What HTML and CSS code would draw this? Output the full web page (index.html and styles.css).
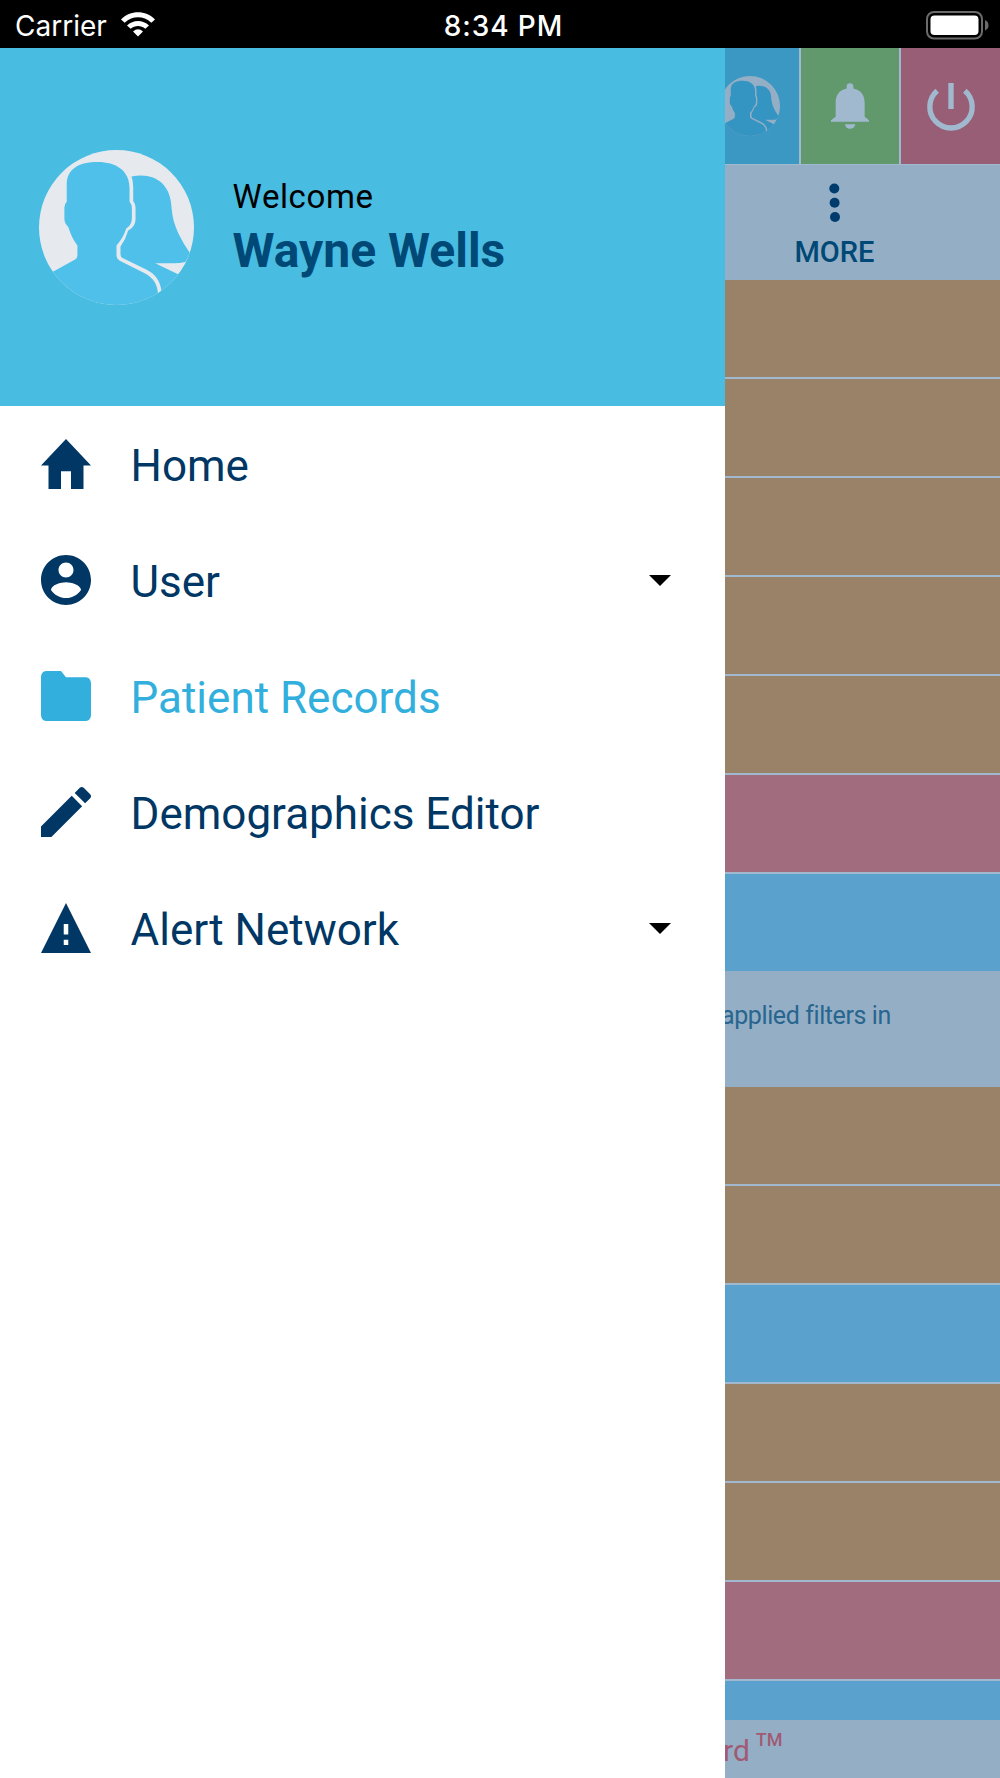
FILE: index.html
```
<!DOCTYPE html>
<html lang="en">
<head>
    <meta charset="UTF-8">
    <meta name="viewport" content="width=device-width, initial-scale=1.0">
    <title>Patient Records</title>
    <link rel="stylesheet" href="styles.css">
</head>
<body>

    <!-- Shared avatar artwork -->
    <svg class="defs" width="0" height="0">
        <defs>
            <clipPath id="avatar-clip"><circle cx="288" cy="292" r="232"/></clipPath>
            <symbol id="avatar" viewBox="56 60 464 464">
                <g clip-path="url(#avatar-clip)">
                    <rect class="avatar-bg" x="50" y="50" width="480" height="480"/>
                    <path class="avatar-fg" d="M99 424L164 388Q171 384 171 375V346Q153 322 144 291C137 284 132 277 132 266V232Q132 222 139 215V165C139 116 175 96 232 96C286 96 327 121 327 174V214Q334 222 334 234V262C334 278 328 288 317 295Q309 322 288 346V372C288 384 292 388 301 393L374 430C398 443 410 462 412 488L400 530H40V424z"/>
                    <path class="avatar-fg" d="M333 139C400 126 451 158 453 235C457 288 482 330 509 370L494 395Q480 399 460 399H404L474 433L520 450L470 530H400L422 480C419 451 402 430 377 418L306 383Q300 380 300 373V349Q316 327 323 301C337 294 345 282 345 266V232Q345 222 338 213V170Q338 153 333 139z"/>
                </g>
            </symbol>
        </defs>
    </svg>

    <!-- Phone status bar -->
    <div class="status-bar">
        <div class="carrier">
            <span>Carrier</span>
            <svg width="34" height="25" viewBox="362 36 102 74">
                <path fill="#fff" d="M362 58C390 29 436 29 464 58L453 68C429 46 397 46 373 68zM380 76C398 58 428 58 446 76L435 86C422 75 404 75 391 86zM398 94Q413 81 428 94L413 109z"/>
            </svg>
        </div>
        <div class="time">8:34 PM</div>
        <svg class="battery" width="63" height="29" viewBox="0 0 63 29">
            <rect x="1" y="1" width="55" height="26.500" rx="7" fill="none" stroke="#6b6b6b" stroke-width="2"/>
            <rect x="4.500" y="4.500" width="48" height="19.500" rx="4" fill="#fff"/>
            <path fill="#6b6b6b" d="M59 9Q62.500 10.500 62.500 14.300T59 19.500z"/>
        </svg>
    </div>

    <div class="screen">
        <!-- Side menu -->
        <aside class="drawer">
            <div class="profile">
                <svg class="profile-avatar"><use href="#avatar"/></svg>
                <div class="profile-text">
                    <p class="welcome">Welcome</p>
                    <p class="name">Wayne Wells</p>
                </div>
            </div>
            <nav class="menu">
                <a class="menu-item">
                    <svg class="menu-icon" viewBox="2 3 20 17" preserveAspectRatio="none"><path d="M10 20v-6h4v6h5v-8h3L12 3 2 12h3v8z"/></svg>
                    <span>Home</span>
                </a>
                <a class="menu-item">
                    <svg class="menu-icon" viewBox="2 2 20 20"><path d="M12 2C6.480 2 2 6.480 2 12s4.480 10 10 10 10-4.480 10-10S17.520 2 12 2zm0 3c1.660 0 3 1.340 3 3s-1.340 3-3 3-3-1.340-3-3 1.340-3 3-3zm0 14.200c-2.500 0-4.710-1.280-6-3.220.030-1.990 4-3.080 6-3.080 1.990 0 5.970 1.090 6 3.080-1.290 1.940-3.500 3.220-6 3.220z"/></svg>
                    <span>User</span>
                    <svg class="caret" viewBox="0 0 22 11"><path d="M0 0h22L11 11z"/></svg>
                </a>
                <a class="menu-item active">
                    <svg class="menu-icon" viewBox="2 4 20 16" preserveAspectRatio="none"><path d="M10 4H4c-1.100 0-1.990.900-1.990 2L2 18c0 1.100.900 2 2 2h16c1.100 0 2-.900 2-2V8c0-1.100-.900-2-2-2h-8l-2-2z"/></svg>
                    <span>Patient Records</span>
                </a>
                <a class="menu-item">
                    <svg class="menu-icon" viewBox="3 3 18 18"><path d="M3 17.250V21h3.750L17.810 9.940l-3.750-3.750L3 17.250zM20.710 7.040c.390-.390.390-1.020 0-1.410l-2.340-2.340c-.390-.390-1.020-.390-1.410 0l-1.830 1.830 3.750 3.750 1.830-1.830z"/></svg>
                    <span>Demographics Editor</span>
                </a>
                <a class="menu-item">
                    <svg class="menu-icon" viewBox="1 2 22 19" preserveAspectRatio="none"><path d="M1 21h22L12 2 1 21zm12-3h-2v-2h2v2zm0-4h-2v-4h2v4z"/></svg>
                    <span>Alert Network</span>
                    <svg class="caret" viewBox="0 0 22 11"><path d="M0 0h22L11 11z"/></svg>
                </a>
            </nav>
        </aside>

        <!-- Dimmed page next to the menu -->
        <main class="page">
            <div class="actions">
                <div class="action action-user"><svg class="small-avatar"><use href="#avatar"/></svg></div>
                <div class="action action-alerts">
                    <svg width="38" height="46" viewBox="393 131 114 137"><path d="M440 147V141A10 10 0 0 1 460 141V147C482 151 494 167 494 190V232L507 242V247H393V242L407 232V190C407 167 418 151 440 147zM435 254H466C464 263 458 268 450 268S437 263 435 254z"/></svg>
                </div>
                <div class="action action-logout">
                    <svg width="48" height="46" viewBox="679 129 144 138"><path d="M743 129h16v78h-16z"/><path fill="none" stroke="#a0b9cf" stroke-width="16" d="M709.500 152.500A63.500 63.500 0 1 0 792.500 152.500"/></svg>
                </div>
            </div>
            <div class="toolbar">
                <svg width="12" height="40" viewBox="0 0 12 40"><circle cx="5.300" cy="5.500" r="5"/><circle cx="5.600" cy="19.700" r="5"/><circle cx="6" cy="34" r="5"/></svg>
                <span>MORE</span>
            </div>
            <div class="rows">
                <div class="row"></div>
                <div class="row"></div>
                <div class="row"></div>
                <div class="row"></div>
                <div class="row"></div>
                <div class="row pink"></div>
                <div class="row blue"></div>
            </div>
            <div class="message">applied filters in</div>
            <div class="rows">
                <div class="row"></div>
                <div class="row"></div>
                <div class="row blue"></div>
                <div class="row"></div>
                <div class="row"></div>
                <div class="row pink"></div>
                <div class="row blue cut"></div>
            </div>
            <footer class="footer"><span>rd</span><span class="tm">TM</span></footer>
        </main>
    </div>

</body>
</html>
```
FILE: styles.css
```
/* Reset and base styles */
* {
    box-sizing: border-box;
    margin: 0;
    padding: 0;
}
body {
    width: 1000px;
    height: 1778px;
    overflow: hidden;
    font-family: Roboto, sans-serif;
    background-color: #fff;
}
svg {
    display: block;
    flex-shrink: 0;
    overflow: visible;
}
.defs {
    position: absolute;
}
/* Status bar */
.status-bar {
    display: grid;
    grid-template-columns: 1fr auto 1fr;
    align-items: center;
    height: 48px;
    padding: 3px 11px 0 15px;
    background-color: #000;
    color: #fff;
    font-family: Inter, sans-serif;
    font-size: 28px;
}
.carrier {
    display: flex;
    align-items: center;
    gap: 14px;
}
.carrier svg {
    margin-bottom: 3px;
}
.time {
    padding-left: 3px;
    font-weight: 500;
    letter-spacing: 0.9px;
}
.battery {
    justify-self: end;
}
.screen {
    display: grid;
    grid-template-columns: 725px 275px;
    height: 1730px;
}
/* Side menu */
.drawer {
    background-color: #fff;
}
.profile {
    display: flex;
    align-items: center;
    gap: 39px;
    height: 358px;
    padding-left: 38.5px;
    background-color: #48bce1;
}
.profile-avatar {
    width: 155px;
    height: 155px;
}
.profile-text {
    padding-top: 4px;
}
.avatar-bg {
    fill: var(--avatar-bg, #e6eaef);
}
.avatar-fg {
    fill: var(--avatar-fg, #4fc0e9);
}
.welcome {
    color: #000;
    font-size: 33px;
    line-height: 44px;
    letter-spacing: 0.6px;
}
.name {
    color: #004876;
    font-size: 48px;
    font-weight: bold;
    line-height: 64px;
}
.menu {
    display: flex;
    flex-direction: column;
}
.menu-item {
    display: flex;
    align-items: center;
    height: 116px;
    padding: 0 54px 0 40.5px;
    color: #003764;
    font-size: 44px;
}
.menu-item span {
    padding: 4px 0 0 40px;
}
.menu-icon {
    width: 50px;
    height: 50px;
    fill: currentColor;
}
.active {
    color: #32afdc;
}
.caret {
    width: 22px;
    height: 11px;
    margin-left: auto;
    fill: #000;
}
/* Dimmed page */
.page {
    overflow: hidden;
    background-color: #94afc5;
}
.actions {
    display: grid;
    grid-template-columns: 74px 98px 99px;
    gap: 2px;
    height: 117px;
    border-bottom: 1px solid #a0b9cf;
    background-color: #a0b9cf;
}
.action {
    display: flex;
    align-items: center;
    justify-content: center;
    overflow: hidden;
    fill: #a0b9cf;
}
.action-user {
    justify-content: flex-start;
    background-color: #3b98c3;
    --avatar-bg: #94afc5;
    --avatar-fg: #3494c2;
}
.action-alerts {
    background-color: #62996c;
}
.action-logout {
    background-color: #985e76;
}
.small-avatar {
    width: 60px;
    height: 60px;
    margin-left: -5px;
}
.toolbar {
    display: flex;
    flex-direction: column;
    align-items: center;
    height: 115px;
    padding: 18px 56px 0 0;
    color: #004876;
    fill: #003b6e;
    font-size: 29px;
    font-weight: 500;
}
.toolbar span {
    margin-top: 12px;
    line-height: 35px;
}
.rows {
    display: flex;
    flex-direction: column;
    gap: 2px;
    background-color: #a0b9cf;
}
.row {
    height: 97px;
    background-color: #998267;
}
.pink {
    background-color: #a16c7e;
}
.blue {
    background-color: #5aa2cd;
}
.cut {
    height: 39px;
}
.message {
    height: 116px;
    margin-left: -5px;
    padding: 30px 0 0 1px;
    color: #28658f;
    font-size: 25px;
    letter-spacing: -0.4px;
    line-height: 30px;
    white-space: nowrap;
}
.footer {
    display: flex;
    align-items: flex-start;
    gap: 6px;
    height: 58px;
    margin-left: -2px;
    padding-top: 12px;
    color: #a05a74;
    font-size: 30px;
    line-height: 37px;
}
.tm {
    font-size: 18px;
    font-weight: 500;
    line-height: 16px;
}
```
